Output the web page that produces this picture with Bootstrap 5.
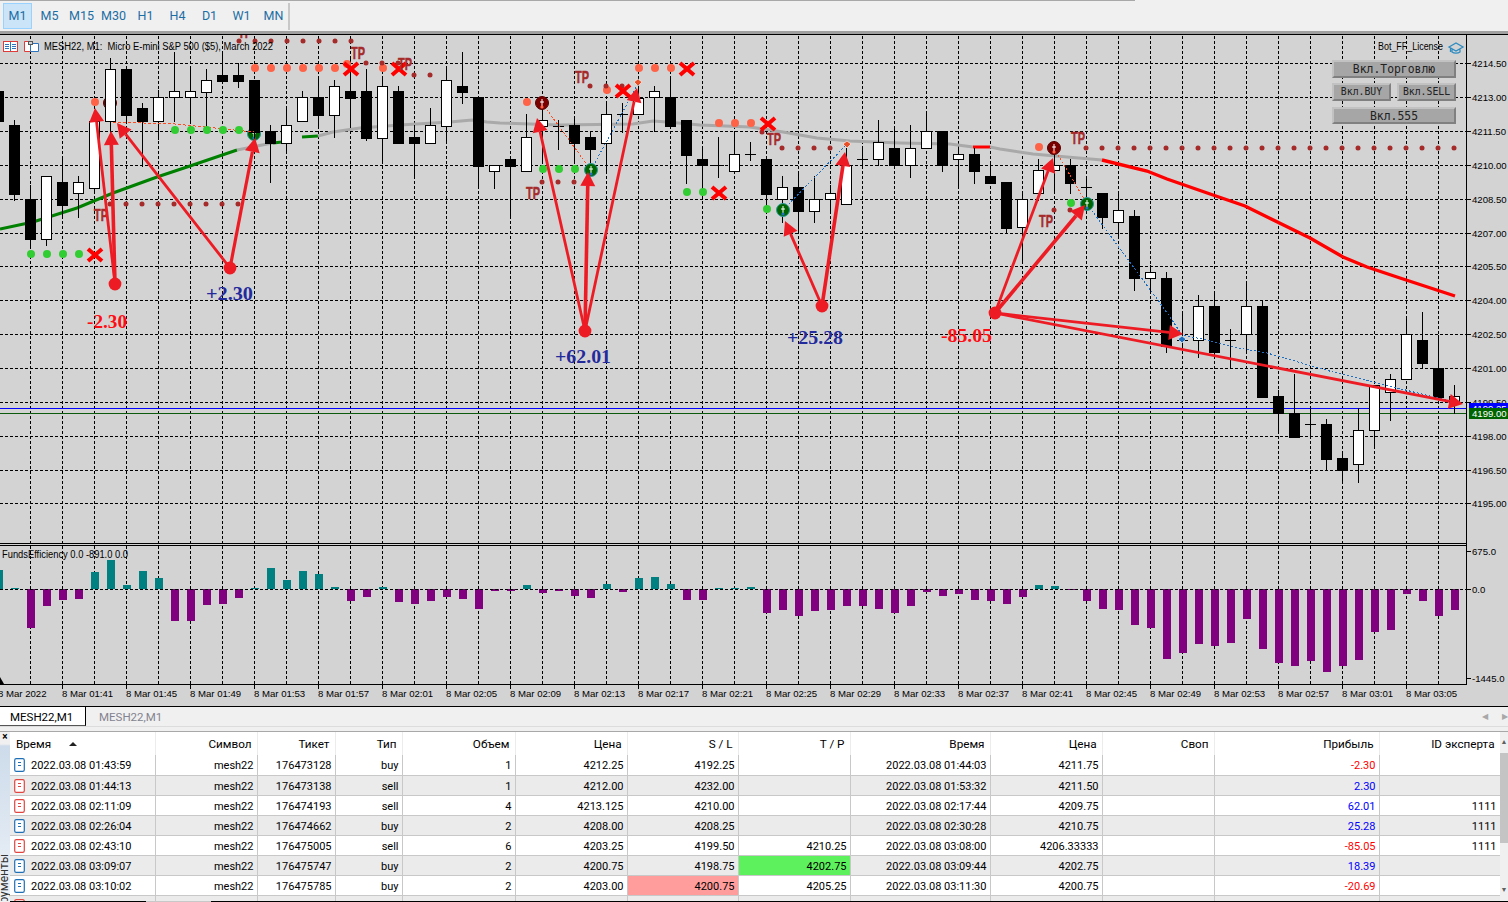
<!DOCTYPE html>
<html lang="ru">
<head>
<meta charset="utf-8">
<title>MESH22, M1</title>
<link href="https://cdn.jsdelivr.net/npm/bootstrap@5.3.0/dist/css/bootstrap.min.css" rel="stylesheet">
<style>
html,body{height:100%;overflow:hidden;background:#f0f0f0;font-family:"Roboto","Liberation Sans",sans-serif;}
.tf-bar{height:35px;background:linear-gradient(to right,#a8a8a8 1135px,#f0f0f0 1135px) top left/100% 1px no-repeat,#f0f0f0;border-bottom:1px solid #000;box-shadow:inset 0 -3px 0 #a0a0a0;padding:3px 0 0 3px;}
.tf-group{width:287px;height:27px;border-right:2px solid #c8c8c8;}
.tf-btn{flex:0 0 29px;height:26px;margin-right:3px;padding:0;border:1px solid transparent;border-radius:0;color:#1c6ea4;font:12.5px/24px "Roboto","Liberation Sans",sans-serif;background:transparent;}
.tf-btn:last-child{margin-right:0;}
.tf-btn.active,.tf-btn:hover{background:#cce4f7;border-color:#99d1ff;color:#1c6ea4;}
.chart-wrap{height:671px;background:#d3d3d3;}
.chart-svg{display:block;width:1508px;height:671px;}
.chart-svg text{font-family:"Liberation Sans",sans-serif;font-size:9.6px;fill:#000;}
.chart-svg text.lbl{font-family:"Liberation Serif",serif;font-weight:700;font-size:18px;}
.chart-svg text.tp{font-family:"Liberation Sans",sans-serif;font-weight:700;font-size:17px;fill:#a52a2a;stroke:#a52a2a;stroke-width:.5;}
.chart-svg text.ttl{font-size:10px;}
.chart-svg text.wt{fill:#fff;}
.ea-btn{height:18px;padding:0;border-radius:0;background:#a6a6a6;border:2px solid;border-color:#c2c2c2 #808080 #808080 #c2c2c2;color:#222;font:11.4px/14px "DejaVu Sans Mono",monospace;}
.ea-btn:hover{background:#a6a6a6;color:#222;border-color:#c2c2c2 #808080 #808080 #c2c2c2;}
.ea-half{width:59px;font-size:9.8px;}
.ea-short{height:17px;}
.ea-gap5{margin-bottom:5px;}
.ea-gap6{margin-bottom:6px;}
.ea-panel{top:25px;left:1332px;width:124px;}
.tab-bar{height:25px;background:#f0f0f0;border-top:1px solid #000;}
.tab-on,.tab-off{height:19px;font:11.5px/20px "Roboto","Liberation Sans",sans-serif;padding:0;}
.tab-on{width:86px;background:#fff;color:#000;padding-left:10px;border-right:1px solid #000;border-bottom:1px solid #555;}
.tab-off{padding-left:13px;color:#83838f;}
.tab-line{height:1px;background:#dcdcdc;}
.tab-arr{color:#a8a8a8;font-size:8px;line-height:19px;width:20px;text-align:center;}
.tab-arr:last-child{margin-right:-7px;}
.grid-zone{height:170px;background:#fff;border-top:1px solid #a8a8a8;}
.side-pane{width:10px;background:linear-gradient(#f0f0f0 0,#f0f0f0 12px,#cddbea 14px,#dfe8f2 60%,#eef2f7 100%);}
.side-x{font-size:10px;line-height:10px;text-align:center;color:#000;font-weight:700;}
.side-text{bottom:-30px;left:-2px;writing-mode:vertical-rl;transform:rotate(180deg);font:12px/12px "Roboto","Liberation Sans",sans-serif;color:#333;white-space:nowrap;}
.scroll-pane{width:8px;background:#f0f0f0;}
.scroll-up,.scroll-dn{height:21px;font-size:7px;line-height:21px;text-align:center;color:#606060;}
.scroll-thumb{height:90px;background:#c4c4c4;}
.trades{width:1490px;table-layout:fixed;margin:0;--bs-table-bg:transparent;font-size:11px;color:#000;}
.trades col:nth-child(1){width:145px}.trades col:nth-child(2){width:102px}.trades col:nth-child(3){width:78px}.trades col:nth-child(4){width:67px}.trades col:nth-child(5){width:113px}.trades col:nth-child(6){width:112px}.trades col:nth-child(7){width:111px}.trades col:nth-child(8){width:112px}.trades col:nth-child(9){width:140px}.trades col:nth-child(10){width:112px}.trades col:nth-child(11){width:112px}.trades col:nth-child(12){width:165px}.trades col:nth-child(13){width:121px}
.trades th,.trades td{padding:0 3px 0 0;text-align:right;vertical-align:middle;border-right:1px solid #c8c8c8;border-bottom:1px solid #c8c8c8;white-space:nowrap;overflow:hidden;box-shadow:none;}
.trades th{height:23px;font-weight:400;font-size:11.7px;border-bottom:0;padding:2px 5px 0 0;border-right-color:#ececec;line-height:21px;}
.trades td{height:20px;padding-top:2px;line-height:17px;}
.trades tbody tr:nth-child(even) td{background:#ebebeb;}
.trades th.c1,.trades td.c1{text-align:left;padding-right:0;}
.trades th.c1{padding-left:6px;}
.sort-up{display:inline-block;margin-left:18px;width:0;height:0;border:4px solid transparent;border-top:0;border-bottom:4px solid #222;vertical-align:2px;}
.doc-ic{width:11px;height:14px;margin:0 6px 0 4px;vertical-align:-3px;}
.c-red{color:#f00;}
.c-blue{color:#00f;}
.trades tbody tr td.hit-sl{background:#ff9d9d;}
.trades tbody tr td.hit-tp{background:#5ef15e;}
.end-line{height:1px;background:linear-gradient(to right,#f0f0f0 10px,#000 10px,#000 146px,#c8c8c8 146px,#c8c8c8 211px,#000 211px);}
</style>
</head>
<body class="m-0">
<svg width="0" height="0" class="position-absolute">
 <symbol id="doc-b" viewBox="0 0 11 14"><rect x=".7" y=".7" width="9.6" height="12.6" rx="1.6" fill="#fff" stroke="#1f6fb5" stroke-width="1.2"/><path d="M4 4.5h3M4 7.5h3" stroke="#1f6fb5" fill="none"/></symbol>
 <symbol id="doc-r" viewBox="0 0 11 14"><rect x=".7" y=".7" width="9.6" height="12.6" rx="1.6" fill="#fff" stroke="#e2453f" stroke-width="1.2"/><path d="M4 4.5h3M4 7.5h3" stroke="#e2453f" fill="none"/></symbol>
</svg>
<div class="d-flex flex-column vh-100">
 <div class="tf-bar d-flex">
  <div class="tf-group d-flex">
   <button class="btn tf-btn active">M1</button><button class="btn tf-btn">M5</button><button class="btn tf-btn">M15</button><button class="btn tf-btn">M30</button><button class="btn tf-btn">H1</button><button class="btn tf-btn">H4</button><button class="btn tf-btn">D1</button><button class="btn tf-btn">W1</button><button class="btn tf-btn">MN</button>
  </div>
 </div>
 <div class="chart-wrap position-relative">
  <svg id="chart" class="chart-svg" viewBox="0 35 1508 671"></svg>
  <div class="ea-panel position-absolute d-flex flex-wrap justify-content-between">
   <button class="btn ea-btn w-100 ea-gap5">Вкл.Торговлю</button>
   <button class="btn ea-btn ea-half ea-gap6">Вкл.BUY</button>
   <button class="btn ea-btn ea-half ea-gap6">Вкл.SELL</button>
   <button class="btn ea-btn ea-short w-100">Вкл.555</button>
  </div>
 </div>
 <div class="tab-bar">
  <div class="d-flex">
   <div class="tab-on">MESH22,M1</div>
   <div class="tab-off flex-grow-1">MESH22,M1</div>
   <div class="tab-arr">&#9664;</div><div class="tab-arr">&#9654;</div>
  </div>
  <div class="tab-line"></div>
 </div>
 <div class="grid-zone d-flex overflow-hidden">
  <div class="side-pane position-relative overflow-hidden">
   <div class="side-x">&#215;</div>
   <div class="side-text position-absolute">Инструменты</div>
  </div>
  <div class="flex-grow-1 overflow-hidden">
   <table class="table trades">
    <colgroup><col><col><col><col><col><col><col><col><col><col><col><col><col></colgroup>
    <thead><tr><th class="c1">Время<span class="sort-up"></span></th><th>Символ</th><th>Тикет</th><th>Тип</th><th>Объем</th><th>Цена</th><th>S / L</th><th>T / P</th><th>Время</th><th>Цена</th><th>Своп</th><th>Прибыль</th><th>ID эксперта</th></tr></thead>
    <tbody>
     <tr><td class="c1"><svg class="doc-ic"><use href="#doc-b"/></svg>2022.03.08 01:43:59</td><td>mesh22</td><td>176473128</td><td>buy</td><td>1</td><td>4212.25</td><td>4192.25</td><td></td><td>2022.03.08 01:44:03</td><td>4211.75</td><td></td><td class="c-red">-2.30</td><td></td></tr>
     <tr><td class="c1"><svg class="doc-ic"><use href="#doc-r"/></svg>2022.03.08 01:44:13</td><td>mesh22</td><td>176473138</td><td>sell</td><td>1</td><td>4212.00</td><td>4232.00</td><td></td><td>2022.03.08 01:53:32</td><td>4211.50</td><td></td><td class="c-blue">2.30</td><td></td></tr>
     <tr><td class="c1"><svg class="doc-ic"><use href="#doc-r"/></svg>2022.03.08 02:11:09</td><td>mesh22</td><td>176474193</td><td>sell</td><td>4</td><td>4213.125</td><td>4210.00</td><td></td><td>2022.03.08 02:17:44</td><td>4209.75</td><td></td><td class="c-blue">62.01</td><td>1111</td></tr>
     <tr><td class="c1"><svg class="doc-ic"><use href="#doc-b"/></svg>2022.03.08 02:26:04</td><td>mesh22</td><td>176474662</td><td>buy</td><td>2</td><td>4208.00</td><td>4208.25</td><td></td><td>2022.03.08 02:30:28</td><td>4210.75</td><td></td><td class="c-blue">25.28</td><td>1111</td></tr>
     <tr><td class="c1"><svg class="doc-ic"><use href="#doc-r"/></svg>2022.03.08 02:43:10</td><td>mesh22</td><td>176475005</td><td>sell</td><td>6</td><td>4203.25</td><td>4199.50</td><td>4210.25</td><td>2022.03.08 03:08:00</td><td>4206.33333</td><td></td><td class="c-red">-85.05</td><td>1111</td></tr>
     <tr><td class="c1"><svg class="doc-ic"><use href="#doc-b"/></svg>2022.03.08 03:09:07</td><td>mesh22</td><td>176475747</td><td>buy</td><td>2</td><td>4200.75</td><td>4198.75</td><td class="hit-tp">4202.75</td><td>2022.03.08 03:09:44</td><td>4202.75</td><td></td><td class="c-blue">18.39</td><td></td></tr>
     <tr><td class="c1"><svg class="doc-ic"><use href="#doc-b"/></svg>2022.03.08 03:10:02</td><td>mesh22</td><td>176475785</td><td>buy</td><td>2</td><td>4203.00</td><td class="hit-sl">4200.75</td><td>4205.25</td><td>2022.03.08 03:11:30</td><td>4200.75</td><td></td><td class="c-red">-20.69</td><td></td></tr>
     <tr><td class="c1"><svg class="doc-ic"><use href="#doc-r"/></svg></td><td></td><td></td><td></td><td></td><td></td><td></td><td></td><td></td><td></td><td></td><td></td><td></td></tr>
    </tbody>
   </table>
  </div>
  <div class="scroll-pane d-flex flex-column">
   <div class="scroll-up">&#9650;</div>
   <div class="scroll-thumb"></div>
   <div class="scroll-dn mt-auto">&#9660;</div>
  </div>
 </div>
 <div class="end-line"></div>
</div>
<script>
var C=[
['b',70,125,91,121],['b',120,200,125,194],['b',185,248,199,239],['w',176,245,176,239],['b',159,217,182,205],['w',176,217,182,193],
['w',121,193,121,188],['w',58,133,69,121],['b',69,122,69,115],['b',103,166,108,121],['w',90,139,97,121],['w',52,121,91,97],['w',69,121,91,97],
['w',69,127,80,92],['b',52,82,75,81],['b',63,87,75,81],['b',80,140,80,132],['b',125,182,131,143],['w',107,153,125,143],['w',91,121,97,121],
['b',77,127,97,115],['w',80,137,86,115],['b',58,127,91,98],['b',69,140,91,138],['w',77,160,86,138],['b',86,143,91,143],['b',125,177,137,143],
['w',108,143,125,143],['w',69,140,80,126],['b',52,103,86,92],['b',97,188,97,166],['w',165,188,165,171],['b',159,217,159,166],['w',114,171,137,171],
['w',103,163,120,126],['d',120,149,126],['b',119,163,125,143],['b',132,170,137,149],['w',102,170,114,143],['d',103,132,114],['w',78,114,98,114],
['w',86,131,91,97],['b',77,127,97,126],['b',120,183,120,155],['b',148,187,159,165],['d',137,177,165],['w',131,171,154,171],['d',142,160,154],
['b',159,205,159,194],['w',176,222,187,199],['b',173,230,187,211],['w',176,222,199,211],['w',185,212,193,199],['w',148,204,165,204],['d',148,165,159],
['w',120,165,142,159],['b',126,165,148,165],['w',125,177,148,165],['w',113,148,131,148],['b',131,171,131,165],['w',148,187,154,159],['b',148,183,154,171],
['b',163,183,176,183],['b',182,233,182,228],['w',193,262,199,227],['w',159,200,170,193],['w',142,190,165,170],['b',159,193,165,183],['d',178,212,187],
['b',193,228,193,217],['w',192,235,210,222],['b',210,290,216,278],['w',265,293,272,278],['b',272,352,278,346],['d',312,348,340],['w',295,357,306,340],
['b',293,357,306,352],['d',329,368,340],['w',282,352,306,334],['b',300,397,306,397],['b',390,433,396,413],['b',374,437,413,437],['d',407,438,424],
['b',419,470,424,459],['b',453,482,458,470],['w',408,482,430,464],['w',385,448,385,430],['w',374,420,379,392],['w',317,379,334,379],['b',312,368,340,363],
['b',335,397,368,397],['w',385,413,396,403]];
var H=[19,.5,-39,-17,-11,-10,17,29,4,18,11,-32,-32,-16,-15,-9,.4,21,9,18,15,2,-12,-8,2,-13,-15,-12,-8,-10,-20,-2,-2,4,-4,-2,-7,-9,5,-3,11,12,5,-11,-11,1,1,2,-24,-21,-27,-22,-21,-17,-17,-20,-24,-17,-3,-7,-5,-11,-12,-15,-8,4,3,-.5,-12,-20,-21,-36,-39,-70,-64,-55,-57,-54,-30,-60,-74,-77,-72,-83,-77,-71,-43,-41,-5,-12,-27,-21];
var o=[],i,x;
function line(a,b,c,d,s,w,extra){o.push('<line x1="'+a+'" y1="'+b+'" x2="'+c+'" y2="'+d+'" stroke="'+s+'" stroke-width="'+(w||1)+'" '+(extra||'')+'/>');}
function poly(p,s,w,extra){o.push('<polyline fill="none" points="'+p+'" stroke="'+s+'" stroke-width="'+w+'" '+(extra||'')+'/>');}
function txt(t,a,b,cls,extra){o.push('<text x="'+a+'" y="'+b+'" class="'+(cls||'')+'" '+(extra||'')+'>'+t+'</text>');}
function dot(a,b,r,f){o.push('<circle cx="'+a+'" cy="'+b+'" r="'+r+'" fill="'+f+'"/>');}
var crisp='shape-rendering="crispEdges"',dash=crisp+' stroke-dasharray="3 2"';
function ring(a,b,f,r){o.push('<circle cx="'+a+'" cy="'+b+'" r="'+(r||6.5)+'" fill="'+f+'" stroke="'+(f=='#006400'?'#2a9a9a':'#5a0000')+'"/>');
 line(a,b-4,a,b+3,'#fff',1);line(a-2,b-1,a+2,b-1,'#fff',1);dot(a,b+4,1.6,f=='#006400'?'#1e6fbf':'#ff6347');}
/* grid */
[63,97,131,165,199,233,266,300,334,368,402,436,470,503].forEach(function(y){line(0,y+.5,1466,y+.5,'#000',1,dash);});
for(x=30;x<1466;x+=32){line(x+.5,36,x+.5,543,'#000',1,dash);line(x+.5,546,x+.5,684,'#000',1,dash);}
line(0,589.5,1466,589.5,'#000',1,dash);
/* price lines */
line(0,408.5,1466,408.5,'#0000ff',1,crisp);line(0,413.5,1466,413.5,'#0b5a0b',1,crisp);
/* moving averages */
poly('0,229 33,222 77,208 113,193 157,177 190,166 237,150','#008000',3);
poly('237,150 267,144 273,143','#a9a9a9',3);
poly('273,143 282,142','#008000',3);poly('302,137 318,136','#008000',3);
poly('318,136 333,132 360,128 400,125 450,122 472,120 487,122 500,123 560,125 633,124 653,121 667,122 700,125 750,127 783,132 817,138 850,141 900,143 950,144 973,147','#a9a9a9',3);
poly('973,147 990,147','#f00',3);
poly('990,147 1000,149 1033,154 1067,157 1102,160','#a9a9a9',3);
poly('1102,160 1147,171 1167,179 1213,195 1245,206 1310,238 1343,257 1367,267 1400,278 1455,296','#f00',3.4);
ring(110,103,'#7b0000');ring(254,134,'#006400');
/* candles */
C.forEach(function(c,k){var x=-2+16*k;
 line(x+.5,c[1],x+.5,c[2]+1,'#000',1,crisp);
 if(c[0]=='d'){line(x-5,c[3]+.5,x+6,c[3]+.5,'#000',1,crisp);return;}
 o.push('<rect x="'+(x-4.5)+'" y="'+(c[3]+.5)+'" width="10" height="'+(c[4]-c[3])+'" fill="'+(c[0]=='w'?'#fff':'#000')+'" stroke="#000" '+crisp+'/>');
});
/* histogram */
H.forEach(function(v,k){var x=-2+16*k,h=Math.max(Math.abs(v),1);
 o.push('<rect x="'+(x-3.5)+'" y="'+(v>0?589-h:589)+'" width="8" height="'+h+'" fill="'+(v>0?'#008080':'#800080')+'" '+crisp+'/>');
});
line(0,589.5,1466,589.5,'#000',1,dash);
/* trade links */
var sd=crisp+' stroke-dasharray="2 2"';
poly('113,122 175,124 254,132','#ff4a20',1,crisp+' stroke-dasharray="3 2"');
poly('542,103 591,170','#ff4a20',1,sd);
poly('591,170 639,82','#1e6fbf',1,sd);
poly('783,210 847,144','#1e6fbf',1,sd);
poly('1054,148 1087,204','#ff4a20',1,sd);
poly('1087,204 1143,280 1160,303 1172,320 1182,335 1207,340 1233,347 1267,353 1333,372 1373,382 1454,402','#1e6fbf',1,sd);
/* dots */
var G='#32cd32',T='#ff6347',B='#a52a2a';
[[31,254],[47,254],[63,254],[79,254],[175,130],[191,130],[207,130],[223,130],[239,130],[543,169],[559,169],[575,169],[687,192],[703,192],[767,209],[1071,203]].forEach(function(p){dot(p[0],p[1],4,G);});
[[95,102],[527,102],[255,68],[271,68],[287,68],[303,68],[319,68],[335,68],[347,64],[383,68],[607,90],[639,68],[655,68],[671,68],[719,123],[735,123],[751,123],[1039,147]].forEach(function(p){dot(p[0],p[1],4,T);});
var bd=[[239,41],[255,41],[271,41],[287,41],[303,41],[319,41],[335,41],[351,41],[366,63],[382,63],[398,63],[414,75],[430,75],[590,86],[606,86],[622,86],[542,182],[558,182],[574,182],[782,148],[798,148],[814,148],[830,148],[1054,210],[1070,210],[762,132]];
for(i=110;i<=238;i+=16)bd.push([i,204]);
for(i=1086;i<=1454;i+=16)bd.push([i,148]);
bd.forEach(function(p){dot(p[0],p[1],2.5,B);});
/* ring markers */
ring(591,170,'#006400');ring(783,210,'#006400');ring(1087,204,'#006400');
ring(542,103,'#7b0000');ring(1054,148,'#7b0000');
/* small marks */
function mark(a,b,f){o.push('<polygon points="'+(a-4)+','+b+' '+a+','+(b-3)+' '+(a+4)+','+b+' '+a+','+(b+4)+'" fill="'+f+'" stroke="#fff" stroke-width=".6"/>');}
mark(638,82,'#e8502a');mark(847,144,'#e8502a');mark(1182,339,'#1e6fbf');
/* crosses */
[[95,255],[351,69],[399,69],[623,91],[687,69],[719,193],[768,124]].forEach(function(p){var a=p[0],b=p[1];
 line(a-7,b-6,a+7,b+6,'#f00',4);line(a-7,b+6,a+7,b-6,'#f00',4);});
/* TP */
[[358,59],[405,70],[101,221],[245,38],[582,83],[533,199],[774,145],[1078,144],[1046,227]].forEach(function(p){
 txt('TP',p[0]-7,p[1],'tp','textLength="14" lengthAdjust="spacingAndGlyphs"');});
/* arrows */
var AR='#ed1c24';
function arrow(a,b,c,d,w){var dx=c-a,dy=d-b,l=Math.sqrt(dx*dx+dy*dy),ux=dx/l,uy=dy/l,bx=c-ux*14,by=d-uy*14;
 line(a,b,bx,by,AR,w);
 o.push('<polygon points="'+c+','+d+' '+(bx-uy*7.5)+','+(by+ux*7.5)+' '+(bx+uy*7.5)+','+(by-ux*7.5)+'" fill="'+AR+'"/>');}
[[115,284,95,108,2.8],[115,284,111,131,3.6],[230,268,117,123,2.8],[230,268,255,138,3.2],[585,331,537,118,2.8],[585,331,588,172,3.6],[585,331,637,88,2.8],[822,306,785,221,2.8],[822,306,845,152,3.6],[995,313,1053,158,2.8],[995,313,1085,205,3.6],[995,313,1183,334,2.8],[995,313,1463,404,2.8]].forEach(function(p){arrow(p[0],p[1],p[2],p[3],p[4]);});
[[115,284],[230,268],[585,331],[822,306],[995,313]].forEach(function(p){dot(p[0],p[1],6.4,AR);});
/* result labels */
function lbl(t,a,b,w,f){txt(t,a,b,'lbl','textLength="'+w+'" lengthAdjust="spacingAndGlyphs" style="fill:'+f+'"');}
lbl('-2.30',87,328,40,'#ff0d13');lbl('+2.30',206,300,47,'#232a9c');lbl('+62.01',555,363,56,'#232a9c');lbl('+25.28',787,344,56,'#232a9c');lbl('-85.05',941,342,51,'#ff0d13');
/* frames */
line(0,543.5,1466,543.5,'#000',1,crisp);line(0,545.5,1466,545.5,'#000',1,crisp);line(0,684.5,1466,684.5,'#000',1,crisp);
line(1466.5,35,1466.5,685,'#000',1,crisp);
/* price axis */
var P=[[63,'4214.50'],[97,'4213.00'],[131,'4211.50'],[165,'4210.00'],[199,'4208.50'],[233,'4207.00'],[266,'4205.50'],[300,'4204.00'],[334,'4202.50'],[368,'4201.00'],[402,'4199.50'],[436,'4198.00'],[470,'4196.50'],[503,'4195.00']];
P.forEach(function(p){line(1467,p[0]+.5,1471,p[0]+.5,'#000',1,crisp);txt(p[1],1472,p[0]+4);});
o.push('<rect x="1469" y="403" width="39" height="10" fill="#0000ff" '+crisp+'/>');
txt('4199.25',1472,411.5,'wt');
o.push('<rect x="1469" y="408" width="39" height="11" fill="#006400" '+crisp+'/>');
txt('4199.00',1472,417,'wt');
[[551,'675.0'],[589,'0.0'],[678,'-1445.0']].forEach(function(p){line(1467,p[0]+.5,1471,p[0]+.5,'#000',1,crisp);txt(p[1],1472,p[0]+4);});
/* time axis */
var T2=['8 Mar 2022','8 Mar 01:41','8 Mar 01:45','8 Mar 01:49','8 Mar 01:53','8 Mar 01:57','8 Mar 02:01','8 Mar 02:05','8 Mar 02:09','8 Mar 02:13','8 Mar 02:17','8 Mar 02:21','8 Mar 02:25','8 Mar 02:29','8 Mar 02:33','8 Mar 02:37','8 Mar 02:41','8 Mar 02:45','8 Mar 02:49','8 Mar 02:53','8 Mar 02:57','8 Mar 03:01','8 Mar 03:05'];
T2.forEach(function(t,k){var x=-2+64*k;line(x+.5,684,x+.5,689,'#000',1,crisp);txt(t,x,697);});
o.push('<polygon points="0,677 4,684 0,684" fill="#000"/>');
/* captions */
txt('MESH22, M1:  Micro E-mini S&amp;P 500 ($5), March 2022',44,50,'ttl','xml:space="preserve" textLength="229" lengthAdjust="spacingAndGlyphs"');
txt('FundsEfficiency 0.0 -891.0 0.0',2,558,'ttl','textLength="126" lengthAdjust="spacingAndGlyphs"');
txt('Bot_FF_License',1378,50,'ttl','textLength="65" lengthAdjust="spacingAndGlyphs"');
/* title icons */
o.push('<rect x="3.5" y="41.5" width="14" height="10" fill="#fff" stroke="#e03b3b"/><path d="M10.5 42v9M5 44.5h4M5 46.5h4M5 48.5h4M12 44.5h4M12 46.5h4M12 48.5h4" stroke="#2a74c0" fill="none" '+crisp+'/>');
o.push('<path d="M24.5 41.5h6v10h-6z" fill="#fff" stroke="#e03b3b"/><path d="M30.5 43.5h8v8h-8z" fill="#fff" stroke="#2a74c0"/><path d="M28 41.5h4v3h-4z" fill="#d3d3d3" stroke="#555" '+crisp+'/>');
/* hat icon */
o.push('<path d="M1449 47l7-4 7 4-7 4zM1452 49.5v2.5c2 1.4 6 1.4 8 0v-2.5M1450.5 48v4" fill="none" stroke="#2e8bc0" stroke-width="1.3"/>');
document.getElementById('chart').innerHTML=o.join('');
</script>
</body>
</html>
